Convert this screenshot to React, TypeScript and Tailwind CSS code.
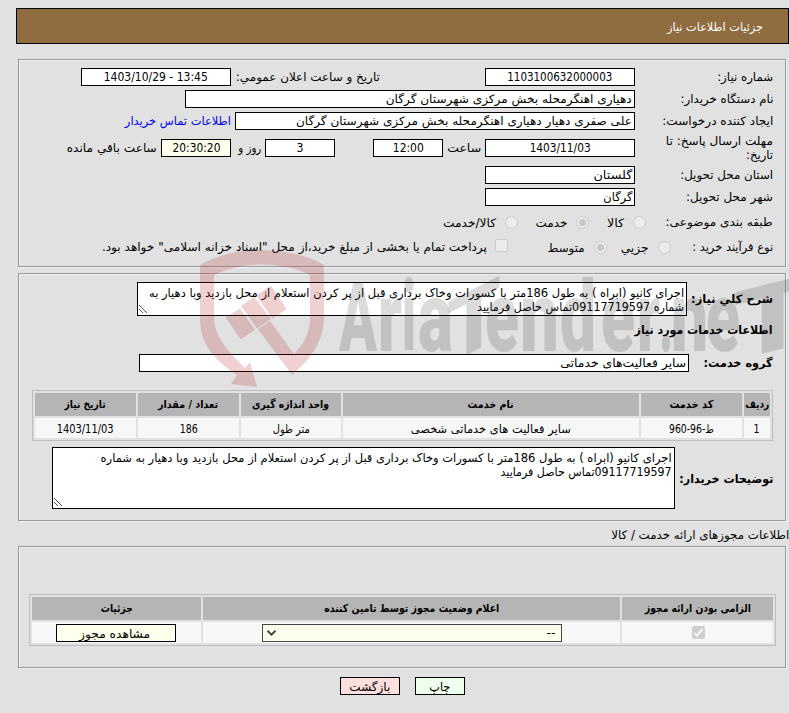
import { useLayoutEffect, useRef, useState, type ReactNode } from "react";

type TextProps = { w: number; className?: string; ltr?: boolean; children: ReactNode };

/** Single line of text condensed or widened to an exact column width. */
function T({ w, className = "", ltr = false, children }: TextProps) {
  const ref = useRef<HTMLSpanElement>(null);
  const [scale, setScale] = useState(1);
  useLayoutEffect(() => {
    const natural = ref.current?.getBoundingClientRect().width ?? 0;
    if (natural > 0 && scale === 1) setScale(w / natural);
  }, []);
  return (
    <span className={"block shrink-0 whitespace-nowrap leading-[14px] " + className} style={{ width: w }} dir="rtl">
      <span
        ref={ref}
        dir={ltr ? "ltr" : "rtl"}
        className="inline-block origin-right"
        style={{ transform: `scaleX(${scale})` }}
      >
        {children}
      </span>
    </span>
  );
}

function Box({ className = "", children }: { className?: string; children?: ReactNode }) {
  return (
    <div className={"flex h-[18px] shrink-0 items-center border border-black " + className}>{children}</div>
  );
}

function Panel({ className = "", children }: { className?: string; children: ReactNode }) {
  return (
    <section
      className={
        "ml-[18px] mr-[3px] border border-[#9a9a9a] shadow-[1px_1px_0_#f0f0f0,inset_1px_1px_0_#f0f0f0] " + className
      }
    >
      {children}
    </section>
  );
}

function Radio({ on = false, className = "" }: { on?: boolean; className?: string }) {
  return (
    <span
      className={
        "flex size-[13px] shrink-0 items-center justify-center rounded-full border border-[#cbcbcb] bg-[#ececec] " +
        className
      }
    >
      {on && <span className="size-[7px] rounded-full bg-[#c6c6c6]" />}
    </span>
  );
}

function Grip() {
  return (
    <svg className="absolute bottom-px left-px" width="9" height="9" viewBox="0 0 9 9" shapeRendering="crispEdges">
      <path d="M0.5 0.5L8 8M0.5 4.5L4.5 8.5" stroke="#555" strokeWidth="1" fill="none" />
    </svg>
  );
}

function Head({ w, children }: { w: number; children: ReactNode }) {
  return (
    <div className="flex h-[23px] items-center justify-center bg-[#b5b5b5] pt-px text-[11px] font-bold">
      <T w={w}>{children}</T>
    </div>
  );
}

function Cell({ className = "", children }: { className?: string; children: ReactNode }) {
  return <div className={"flex items-center justify-center bg-[#f7f7f7] " + className}>{children}</div>;
}

const letters: [string, number, number, number][] = [
  ["A", 339, 38, 96],
  ["r", 378, 24, 98],
  ["i", 402, 14, 98],
  ["a", 418, 35, 98],
  ["e", 485, 34, 98],
  ["n", 520, 39, 98],
  ["d", 560, 36, 98],
  ["e", 601, 34, 98],
  ["r", 637, 23, 98],
  [".", 659, 14, 98],
  ["n", 671, 37, 98],
  ["e", 706, 34, 98],
];

function Watermark() {
  return (
    <svg
      className="pointer-events-none absolute left-0 top-0"
      width="789"
      height="713"
      viewBox="0 0 789 713"
      style={{ direction: "ltr" }}
    >
      <g fill="#af191e" fillOpacity="0.2">
        <path
          fillRule="evenodd"
          d="M200 265C236 245 288 245 324 265V317C324 344 308 361 292 375L258 329L270 321L294 354C304 343 310 334 310 317V275C282 261 242 261 214 275V317C214 337 229 352 245 368L250 362L257 387L231 384L237 375C211 357 200 343 200 317Z"
        />
        <path d="M225.700 317.500L240 308.500L255 330L240.700 339.500Z" />
        <path d="M241 306L254 297L271 319L257 328.500Z" />
        <path d="M256 295.500L271 285.700L286.700 309L272.500 318.500Z" />
      </g>
      <g
        fill="#1e1e1e"
        fillOpacity="0.16"
        fontFamily="Roboto, 'Open Sans', sans-serif"
        fontWeight="900"
        textAnchor="start"
      >
        {letters.map(([ch, x, w, size]) => (
          <text key={x} x={x} y="351" fontSize={size} textLength={w} lengthAdjust="spacingAndGlyphs">
            {ch}
          </text>
        ))}
        <text transform="translate(447 365) skewY(-27)" textLength="54" lengthAdjust="spacingAndGlyphs" fontSize="88">
          T
        </text>
        <text transform="translate(733 361) skewY(-14)" textLength="80" lengthAdjust="spacingAndGlyphs" fontSize="96">
          T
        </text>
      </g>
    </svg>
  );
}

export default function App() {
  return (
    <div
      dir="rtl"
      className="relative h-[713px] w-[789px] overflow-hidden bg-[#e1e1e1] pt-2 font-['DejaVu_Sans_Condensed','DejaVu_Sans',sans-serif] text-[11.5px] text-black"
    >
      <header className="ml-4 flex h-9 items-center border border-black bg-[#8f6d40] pr-[25px] pt-0.5 text-white">
        <T w={96}>جزئیات اطلاعات نیاز</T>
      </header>

      <Panel className="mt-[15px] h-[208px] pr-[12px] pt-2">
        <div className="flex h-[18px] items-center">
          <T w={56}>شماره نیاز:</T>
          <Box className="ms-[82px] w-[150px] justify-center bg-white">
            <T w={105}>1103100632000003</T>
          </Box>
          <T w={144} className="ms-[105px]">تاریخ و ساعت اعلان عمومي:</T>
          <Box className="ms-[5px] w-[150px] justify-center bg-white">
            <T w={104} ltr>1403/10/29 - 13:45</T>
          </Box>
        </div>
        <div className="mt-1 flex h-[18px] items-center">
          <T w={93}>نام دستگاه خریدار:</T>
          <Box className="ms-[45px] w-[450px] bg-white pr-0.5">
            <T w={246}>دهیاری اهنگرمحله بخش مرکزی شهرستان گرگان</T>
          </Box>
        </div>
        <div className="mt-1 flex h-[18px] items-center">
          <T w={111}>ایجاد کننده درخواست:</T>
          <Box className="ms-[27px] w-[400px] bg-white pr-0.5">
            <T w={336}>علی صفری دهیار دهیاری اهنگرمحله بخش مرکزی شهرستان گرگان</T>
          </Box>
          <T w={106} className="ms-1 text-[#0000ee]">اطلاعات تماس خریدار</T>
        </div>
        <div className="mt-[9px] flex h-[18px] items-center">
          <div className="w-[138px]">
            <T w={107}>مهلت ارسال پاسخ: تا</T>
            <T w={27}>تاریخ:</T>
          </div>
          <Box className="w-[150px] justify-center bg-white">
            <T w={61}>1403/11/03</T>
          </Box>
          <T w={34} className="ms-1">ساعت</T>
          <Box className="ms-1 w-[70px] justify-center bg-white">
            <T w={31}>12:00</T>
          </Box>
          <Box className="ms-[38px] w-[70px] justify-center bg-white">
            <T w={7}>3</T>
          </Box>
          <T w={23} className="ms-1">روز و</T>
          <Box className="ms-[7px] w-[70px] justify-center bg-[#ffffee]">
            <T w={48}>20:30:20</T>
          </Box>
          <T w={90} className="ms-1">ساعت باقي مانده</T>
        </div>
        <div className="mt-[9px] flex h-[18px] items-center">
          <T w={93}>استان محل تحویل:</T>
          <Box className="ms-[45px] w-[150px] bg-white pr-0.5">
            <T w={39}>گلستان</T>
          </Box>
        </div>
        <div className="mt-1 flex h-[18px] items-center">
          <T w={87}>شهر محل تحویل:</T>
          <Box className="ms-[51px] w-[150px] bg-white pr-0.5">
            <T w={29}>گرگان</T>
          </Box>
        </div>
        <div className="mt-[7px] flex h-[18px] items-center">
          <T w={107}>طبقه بندی موضوعی:</T>
          <Radio className="ms-[20px]" />
          <T w={17} className="ms-[9px] pt-0.5">کالا</T>
          <Radio on className="ms-[18px]" />
          <T w={32} className="ms-2 pt-0.5">خدمت</T>
          <Radio className="ms-[18px]" />
          <T w={53} className="ms-[9px] pt-0.5">کالا/خدمت</T>
        </div>
        <div className="mt-[7px] flex h-[18px] items-center">
          <T w={81}>نوع فرآیند خرید :</T>
          <Radio className="ms-[21px]" />
          <T w={28} className="ms-[9px] pt-0.5">جزیي</T>
          <Radio on className="ms-[14px]" />
          <T w={37} className="ms-[9px] pt-0.5">متوسط</T>
          <span className="ms-[40px] size-[13px] -translate-y-0.5 rounded-[2px] border border-[#cbcbcb] bg-[#ececec]" />
          <T w={385} className="ms-2">پرداخت تمام یا بخشی از مبلغ خرید،از محل "اسناد خزانه اسلامی" خواهد بود.</T>
        </div>
      </Panel>

      <Panel className="mt-[6px] h-[248px] pr-[12px] pt-2">
        <div className="flex h-[34px] items-center">
          <T w={82} className="font-bold">شرح کلي نیاز:</T>
          <div className="relative ms-1 h-[34px] w-[550px] border border-black bg-white pr-0.5 pt-[3px]">
            <T w={535}>اجرای کانیو (ابراه ) به طول 186متر با کسورات وخاک برداری قبل از پر کردن استعلام از محل بازدید وبا دهیار به</T>
            <T w={207}>شماره 09117719597تماس حاصل فرمایید</T>
            <Grip />
          </div>
        </div>
        <T w={138} className="mt-[7px] font-bold">اطلاعات خدمات مورد نیاز</T>
        <div className="mt-[17px] flex h-[18px] items-center">
          <T w={69} className="font-bold">گروه خدمت:</T>
          <Box className="ms-[15px] w-[550px] bg-white pr-0.5">
            <T w={126}>سایر فعالیت‌های خدماتی</T>
          </Box>
        </div>
        <div className="mt-[18px] grid h-[51px] w-[741px] grid-cols-[26px_101px_296px_100px_101px_101px] grid-rows-[23px_20px] gap-0.5 border border-[#bdbdbd] p-0.5">
          <Head w={24}>ردیف</Head>
          <Head w={44}>کد خدمت</Head>
          <Head w={46}>نام خدمت</Head>
          <Head w={77}>واحد اندازه گیری</Head>
          <Head w={60}>تعداد / مقدار</Head>
          <Head w={41}>تاریخ نیاز</Head>
          <Cell className="pt-px"><T w={6}>1</T></Cell>
          <Cell className="pt-px"><T w={45}>ط-96-960</T></Cell>
          <Cell className="pt-px"><T w={160}>سایر فعالیت های خدماتی شخصی</T></Cell>
          <Cell className="pt-px"><T w={37}>متر طول</T></Cell>
          <Cell className="pt-px"><T w={18}>186</T></Cell>
          <Cell className="pt-px"><T w={57}>1403/11/03</T></Cell>
        </div>
        <div className="mt-1.5 flex h-[62px] items-center">
          <T w={94} className="pt-0.5 font-bold">توضیحات خریدار:</T>
          <div className="relative ms-1 h-[62px] w-[623px] border border-black bg-white pr-0.5 pt-[3px]">
            <T w={571}>اجرای کانیو (ابراه ) به طول 186متر با کسورات وخاک برداری قبل از پر کردن استعلام از محل بازدید وبا دهیار به شماره</T>
            <T w={171}>09117719597تماس حاصل فرمایید</T>
            <Grip />
          </div>
        </div>
      </Panel>

      <T w={178} className="mt-[7px]">اطلاعات مجوزهای ارائه خدمت / کالا</T>

      <Panel className="mt-1 h-[122px] pr-[9px] pt-[47px]">
        <div className="grid h-[52px] w-[747px] grid-cols-[151px_417px_169px] grid-rows-[23px_21px] gap-0.5 border border-[#bdbdbd] p-0.5">
          <Head w={106}>الزامی بودن ارائه مجوز</Head>
          <Head w={175}>اعلام وضعیت مجوز توسط تامین کننده</Head>
          <Head w={32}>جزئیات</Head>
          <Cell className="pl-px">
            <span className="flex size-[13px] items-center justify-center rounded-[2px] bg-[#cfcfcf]">
              <svg width="11" height="11" viewBox="0 0 11 11">
                <path d="M1.5 6L4.2 8.6L9.5 2" stroke="#f7f7f7" strokeWidth="2" fill="none" />
              </svg>
            </span>
          </Cell>
          <Cell>
            <div className="flex h-[18px] w-[300px] items-center justify-between border border-[#444] bg-[#fcfded] pl-[3px] pr-[5px]">
              <T w={9}>--</T>
              <svg width="11" height="8" viewBox="0 0 11 8">
                <path d="M1.5 1.8L5.5 5.6L9.5 1.8" stroke="#444" strokeWidth="2" fill="none" />
              </svg>
            </div>
          </Cell>
          <Cell className="pr-px">
            <Box className="w-[120px] justify-center bg-[#ffffee] pr-0.5 pt-0.5">
              <T w={71}>مشاهده مجوز</T>
            </Box>
          </Cell>
        </div>
      </Panel>

      <div className="mt-[9px] flex gap-[15px] pr-[324px]">
        <Box className="w-[50px] justify-center bg-[#eeffee] pt-0.5">
          <T w={21}>چاپ</T>
        </Box>
        <Box className="w-[60px] justify-center bg-[#ffdede] pt-0.5">
          <T w={41}>بازگشت</T>
        </Box>
      </div>

      <Watermark />
    </div>
  );
}
